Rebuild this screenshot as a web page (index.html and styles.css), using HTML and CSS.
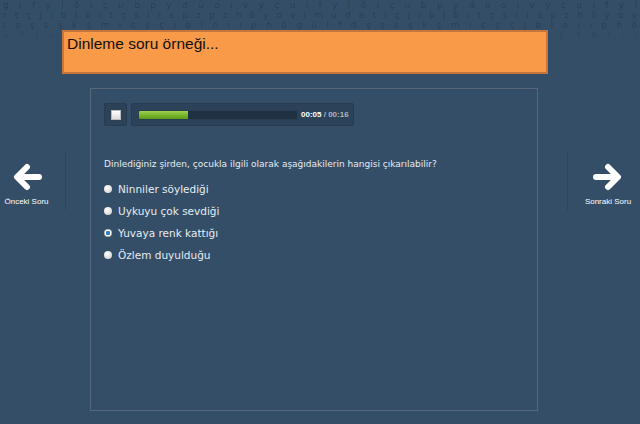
FILE: index.html
```html
<!DOCTYPE html>
<html lang="tr">
<head>
  <meta charset="UTF-8" />
  <title>Dinleme soru örneği</title>
  <link rel="stylesheet" href="styles.css">
</head>
<body>

  <div class="letters">
    <div class="row">g i f y l ö i ç u b p y d ü o i v y ç u i f y l ö i ç u b p y d ü o i v y ç u i f y l</div>
    <div class="row">r t ç j i b j b ı t ç s i r s p z p z h ö y o v i m u d e t l ç j i b j b ı t ç s i r s p z h ö y o v</div>
    <div class="row">ı o ş s ş k ş m ı c ş ç j b l o ı ı p h ö g ü l f d ş ş s ş k ş m ı c ş ç j b l o ı ı p h ö</div>
    <div class="row faint"><span>ö h ı o</span><span>ş d b l ı ı</span></div>
  </div>

  <div class="header">
    <div class="title">Dinleme soru örneği...</div>
  </div>

  <div class="stage">
    <div class="side left">
      <div class="nav">
        <svg width="32" height="28" viewBox="0 0 32 28">
          <path d="M28 14 H7 M16 4 L6 14 L16 24" fill="none" stroke="#fff" stroke-width="6" stroke-linecap="round" stroke-linejoin="round"/>
        </svg>
        <span>Önceki Soru</span>
      </div>
    </div>

    <div class="panel">
      <div class="player">
        <div class="stop"><span></span></div>
        <div class="progress">
          <div class="track"><div class="fill" style="width: 31%"></div></div>
          <div class="time"><b>00:05</b> / 00:16</div>
        </div>
      </div>

      <p class="question">Dinlediğiniz şirden, çocukla ilgili olarak aşağıdakilerin hangisi çıkarılabilir?</p>

      <ul class="options">
        <li><span class="radio"></span>Ninniler söylediği</li>
        <li><span class="radio"></span>Uykuyu çok sevdiği</li>
        <li><span class="radio checked"></span>Yuvaya renk kattığı</li>
        <li><span class="radio"></span>Özlem duyulduğu</li>
      </ul>
    </div>

    <div class="side right">
      <div class="nav">
        <svg width="32" height="28" viewBox="0 0 32 28">
          <path d="M4 14 H25 M16 4 L26 14 L16 24" fill="none" stroke="#fff" stroke-width="6" stroke-linecap="round" stroke-linejoin="round"/>
        </svg>
        <span>Sonraki Soru</span>
      </div>
    </div>
  </div>

</body>
</html>
```

FILE: styles.css
```css
* { box-sizing: border-box; }

body {
  margin: 0;
  width: 640px;
  height: 424px;
  overflow: hidden;
  position: relative;
  background: #344e68;
  font-family: "DejaVu Sans", Verdana, sans-serif;
  color: #e3e9ef;
}

/* faint letter texture along the top */
.letters {
  position: absolute;
  top: 0;
  left: 3px;
  width: 634px;
  overflow: hidden;
  font-size: 9px;
  line-height: 10px;
  color: rgba(15, 28, 42, 0.32);
}

.letters .row {
  height: 10px;
  text-align: justify;
  text-align-last: justify;
}

.letters .faint {
  display: flex;
  justify-content: space-between;
  color: rgba(15, 28, 42, 0.2);
  word-spacing: 8px;
}

.header {
  position: relative;
  padding: 30px 0 0 62px;
}

.title {
  width: 486px;
  height: 44px;
  background: #f89a48;
  border: 2px solid #c7753a;
  padding: 3px 3px;
  font-family: "Liberation Sans", Arial, sans-serif;
  font-size: 15.5px;
  color: #111;
}

.stage {
  display: flex;
  margin-top: 14px;
}

.side.left { width: 90px; flex: none; }
.side.right { width: 102px; flex: none; padding-left: 29px; }

.nav {
  margin-top: 65px;
  height: 57px;
  display: flex;
  flex-direction: column;
  align-items: center;
  padding-top: 10px;
  font-family: "Liberation Sans", Arial, sans-serif;
  font-size: 8px;
  color: #fff;
}

.left .nav { width: 66px; border-right: 1px solid #2d4459; padding-right: 12px; }
.right .nav { width: 73px; border-left: 1px solid #2d4459; padding-left: 8px; }

.nav span { margin-top: 6px; }

.panel {
  width: 448px;
  height: 323px;
  border: 1px solid #58687a;
  padding: 14px 13px;
}

.player {
  display: flex;
  gap: 4px;
}

.stop {
  width: 23px;
  height: 23px;
  background: #2c4259;
  border: 1px solid #283b4f;
  border-radius: 2px;
  display: flex;
  align-items: center;
  justify-content: center;
}

.stop span {
  width: 10px;
  height: 10px;
  background: linear-gradient(#fff, #dcdcdc);
  border: 1px solid #bbb;
}

.progress {
  width: 223px;
  height: 23px;
  background: #2c4259;
  border: 1px solid #283b4f;
  border-radius: 2px;
  display: flex;
  align-items: center;
  padding-left: 6px;
}

.track {
  width: 160px;
  height: 10px;
  flex: none;
  background: #1f3142;
  border: 1px solid #2a3e52;
  border-radius: 2px;
  overflow: hidden;
}

.fill {
  height: 100%;
  background: linear-gradient(#9bd24a, #5a9c14);
}

.time {
  margin-left: 3px;
  white-space: nowrap;
  font-family: "Liberation Sans", Arial, sans-serif;
  font-size: 8px;
  font-weight: bold;
  color: #a9b6c3;
}

.time b { color: #fff; }

.question {
  margin: 33px 0 0;
  font-size: 9px;
  color: #e6ecf1;
}

.options {
  list-style: none;
  margin: 9px 0 0;
  padding: 0;
}

.options li {
  display: flex;
  align-items: center;
  height: 22px;
  font-size: 10.5px;
  color: #e6ecf1;
}

.radio {
  width: 8px;
  height: 8px;
  border-radius: 50%;
  background: radial-gradient(circle at 40% 35%, #fff, #c9c9c9);
  margin-right: 6px;
}

.radio.checked {
  background: radial-gradient(circle, #2e7fc9 0 2px, #fff 2.5px 3px, #bbb 3.5px);
}
```
